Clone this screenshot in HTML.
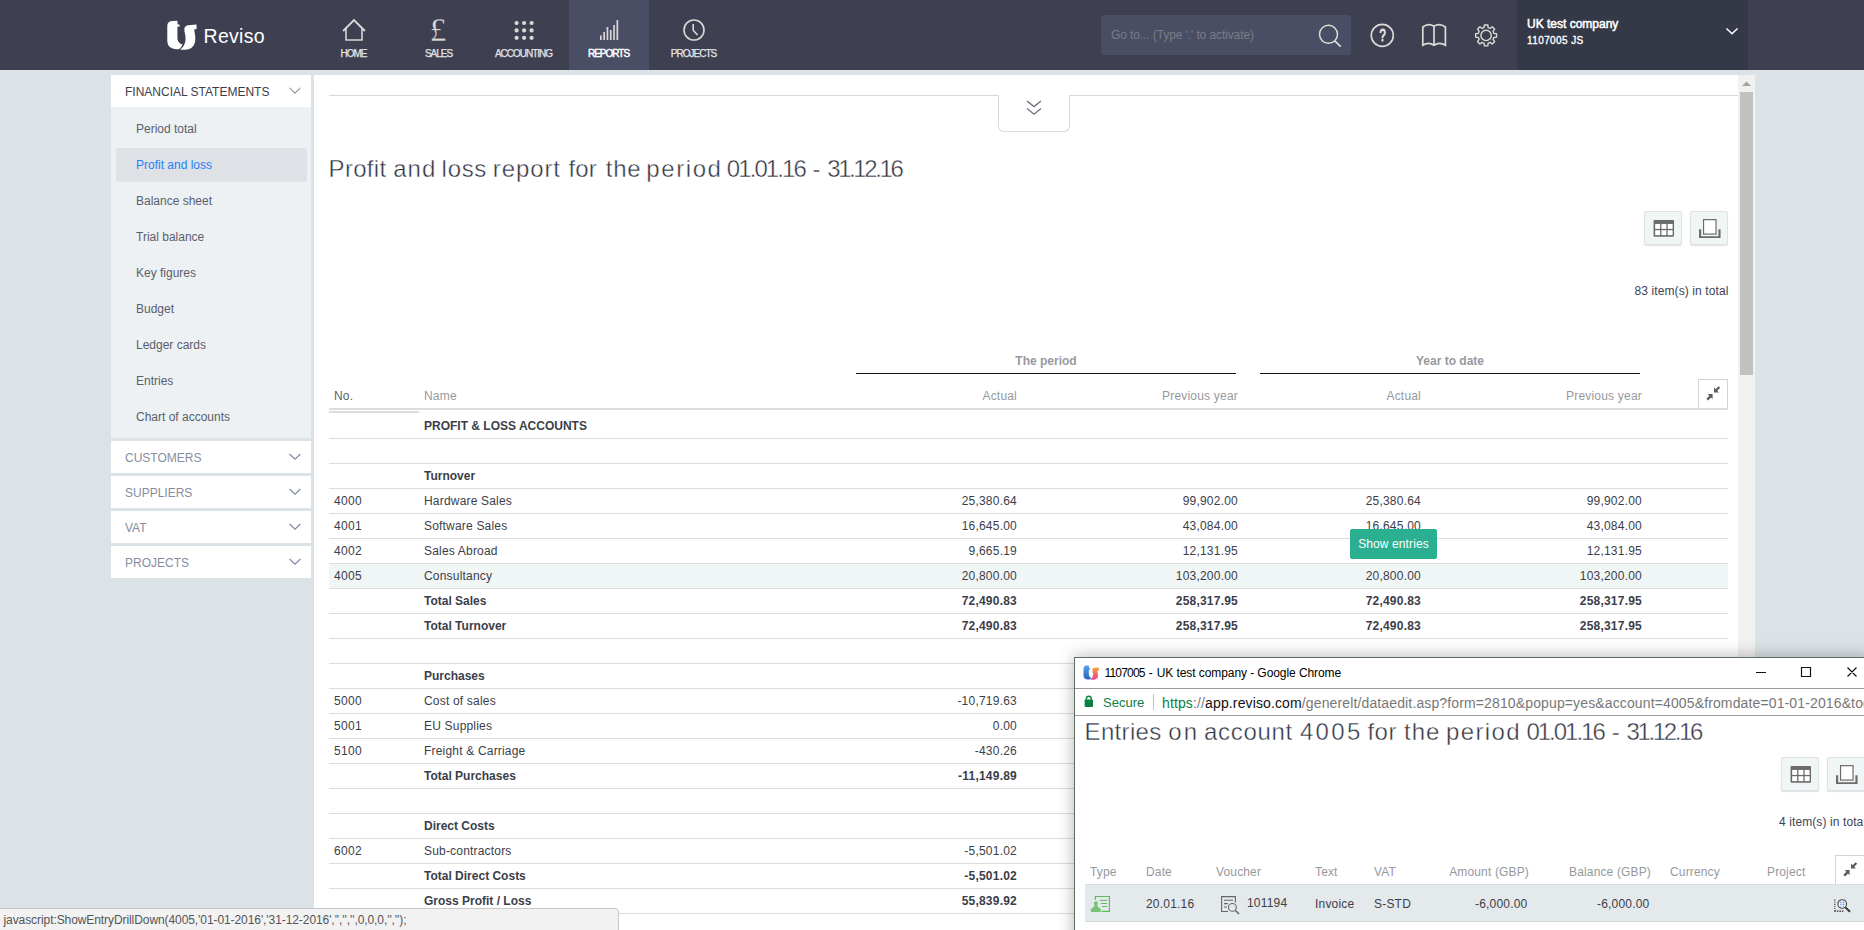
<!DOCTYPE html>
<html lang="en">
<head>
<meta charset="utf-8">
<title>1107005 - UK test company</title>
<style>
*{box-sizing:border-box;margin:0;padding:0}
html,body{width:1864px;height:930px;overflow:hidden}
body{position:relative;background:#dce3e6;font-family:"Liberation Sans",Arial,sans-serif;font-size:12px;color:#3b3d4a}
.abs{position:absolute}
/* ---------- top bar ---------- */
#top{position:absolute;left:0;top:0;width:1864px;height:70px;background:#3e4052}
.nav{position:absolute;top:0;width:80px;height:70px;text-align:center;color:#fff}
.nav.on{background:#4a4e64}
.nav svg{position:absolute;left:20px;top:10px;width:40px;height:40px;overflow:visible}
.nav span{position:absolute;left:-11px;width:100px;top:48px;font-size:10px;line-height:12px;letter-spacing:-1px;padding-left:1px;text-align:center;color:#e4e4e6;-webkit-text-stroke:0.25px #e4e4e6}
.nav.on span{color:#fff;-webkit-text-stroke:0.45px #fff}
#logo-text{position:absolute;left:203.5px;top:22px;font-size:19.5px;line-height:28px;color:#fff;letter-spacing:.3px}
#search{position:absolute;left:1101px;top:15px;width:250px;height:40px;background:#4a4e64;border-radius:3px}
#search span{position:absolute;left:10px;top:13px;font-size:12px;line-height:14px;color:#7a7c86;letter-spacing:-0.1px}
#company{position:absolute;left:1517px;top:0;width:231px;height:70px;background:#343847;color:#fff}
#company b{position:absolute;left:10px;white-space:nowrap}
/* ---------- sidebar ---------- */
#side{position:absolute;left:111px;top:75px;width:200px}
.sh{position:absolute;left:0;width:200px;height:32px;background:#fff;font-size:12px;line-height:34px;padding-left:14px;color:#878d9e;text-transform:uppercase}
.sh svg{position:absolute;right:10.5px;top:11.5px;width:12px;height:8px}
#sbody{position:absolute;left:0;top:32px;width:200px;height:331px;background:#edf1f4}
.si{position:absolute;left:5px;width:191px;height:34px;line-height:34px;padding-left:20px;font-size:12px;color:#5b5e6b;border-radius:3px}
.si.on{background:#dee1e6;color:#1f83f7}
/* ---------- main ---------- */
#main{position:absolute;left:314px;top:75px;width:1441px;height:855px;background:#fff;overflow:hidden}
#title,#ptitle{position:absolute;left:0;top:78px;width:700px;height:32px;font-size:24px;line-height:32px;color:#30323e;white-space:pre;-webkit-text-stroke:0.42px #fff}
#title span,#ptitle span{position:absolute;top:0}
.btn{position:absolute;width:38px;height:34px;background:#f0f5f6;border:1px solid #dde3e5;border-radius:2px;box-shadow:0 1px 1px rgba(0,0,0,.12)}
.btn svg{position:absolute;left:8px;top:7px;width:21.6px;height:19.4px}
.tot{position:absolute;font-size:12px;line-height:14px;color:#3d3f57;white-space:nowrap;text-align:right;letter-spacing:.1px}
/* table */
.gh{position:absolute;font-weight:bold;font-size:12px;color:#98999f;text-align:center;line-height:14px;border-bottom:1px solid #111}
.th{position:absolute;top:314px;font-size:12px;line-height:14px;color:#97989e;white-space:nowrap;letter-spacing:.2px}
.r{position:absolute;left:15px;width:1399px;height:25px;border-bottom:1px solid #dcdcdc;font-size:12px;line-height:24px;color:#3c3e49}
.r i{position:absolute;font-style:normal;top:0;white-space:nowrap}
.r .no{left:5px;letter-spacing:.3px}
.r .nm{left:95px;letter-spacing:.19px}
.r.bd .nm{letter-spacing:0}
.r .a,.r .b,.r .c,.r .d{letter-spacing:.22px}
.r .a{right:711px}
.r .b{right:490px}
.r .c{right:307px}
.r .d{right:86px}
.r.bd{font-weight:bold}
.r.hl{background:#f0f5f5}

/* ---------- popup ---------- */
#pop{position:absolute;left:1074px;top:657px;width:800px;height:300px;background:#fff;border:1px solid #5f6f62;box-shadow:0 0 16px 0 rgba(0,0,0,.3)}
#pop .tb{position:absolute;left:0;top:0;width:100%;height:31px;border-bottom:1px solid #9c9c9c}
#pop .ab{position:absolute;left:0;top:31px;width:100%;height:27px;border-bottom:1px solid #9c9c9c}
#ptitle{top:57.5px}
.pth{position:absolute;top:207px;font-size:12px;line-height:14px;color:#97989e;white-space:nowrap;letter-spacing:.15px}
.ptd{position:absolute;top:239px;font-size:12px;line-height:14px;color:#3c3e49;white-space:nowrap;letter-spacing:.2px}
#status{position:absolute;left:-1px;top:908px;width:620px;height:23px;background:#f2f2f2;border:1px solid #c8c8c8;border-radius:0 4px 0 0;font-size:12px;line-height:23px;color:#555;padding-left:3.5px;white-space:nowrap;overflow:hidden;letter-spacing:-0.08px}
</style>
</head>
<body>
<div id="top">
<svg class="abs" style="left:159.1px;top:13.2px" width="114.4" height="43.7" viewBox="0 0 1864 712"><path fill="#fff" d="M135,210 Q135,140 210,132 L300,128 L303,188 L335,186 L335,222 L300,224 L300,420 Q305,490 385,515 Q370,560 330,585 Q150,610 135,470 Z"/><path fill="#fff" d="M612,188 L612,262 L572,268 Q585,330 592,400 Q600,560 480,590 Q400,605 345,598 Q420,540 432,450 Q440,380 415,300 Q400,215 470,200 Z"/></svg>
<div id="logo-text">Reviso</div>
<div class="nav" style="left:314px"><svg viewBox="0 0 40 40"><path d="M9.1,21 L20,10.2 L30.9,21" fill="none" stroke="#dbd9d6" stroke-width="1.9" stroke-linejoin="miter"/><path d="M12,18.4 V30 H28 V18.4" fill="none" stroke="#d9d7d4" stroke-width="1.6" stroke-linejoin="miter"/></svg><span>HOME</span></div>
<div class="nav" style="left:399px"><div class="abs" style="left:-1px;width:80px;top:9.5px;text-align:center;font-family:'Liberation Serif',serif;font-size:33px;line-height:40px;color:#dcdad8;-webkit-text-stroke:0.3px #3e4052">£</div><span>SALES</span></div>
<div class="nav" style="left:484px"><svg viewBox="0 0 40 40" fill="#d9d7d4"><circle cx="12.6" cy="13" r="2.1"/><circle cx="20.1" cy="13" r="2.1"/><circle cx="27.6" cy="13" r="2.1"/><circle cx="12.6" cy="20.4" r="2.1"/><circle cx="20.1" cy="20.4" r="2.1"/><circle cx="27.6" cy="20.4" r="2.1"/><circle cx="12.6" cy="27.8" r="2.1"/><circle cx="20.1" cy="27.8" r="2.1"/><circle cx="27.6" cy="27.8" r="2.1"/></svg><span>ACCOUNTING</span></div>
<div class="nav on" style="left:569px"><svg viewBox="0 0 40 40" fill="#d9d7d4"><rect x="11" y="25.5" width="1.7" height="4.5"/><rect x="14.3" y="22" width="1.7" height="8"/><rect x="17.6" y="17" width="1.7" height="13"/><rect x="20.9" y="20" width="1.7" height="10"/><rect x="24.2" y="15" width="1.7" height="15"/><rect x="27.5" y="10" width="1.7" height="20"/></svg><span>REPORTS</span></div>
<div class="nav" style="left:654px"><svg viewBox="0 0 40 40"><circle cx="20" cy="20" r="10" fill="none" stroke="#d9d7d4" stroke-width="1.6"/><path d="M19.2,14 V20.3 L23.5,25" fill="none" stroke="#d9d7d4" stroke-width="1.6"/></svg><span>PROJECTS</span></div>
<div id="search"><span>Go to... (Type '.' to activate)</span></div>
<svg class="abs" style="left:1310px;top:15px" width="40" height="40" viewBox="0 0 40 40"><circle cx="18.5" cy="19.3" r="9" fill="none" stroke="#dddad6" stroke-width="1.5"/><path d="M24.8,25.8 L30.7,31.6" stroke="#dddad6" stroke-width="1.7" fill="none"/></svg>
<svg class="abs" style="left:1362px;top:15px" width="40" height="40" viewBox="0 0 40 40"><circle cx="20.3" cy="20.4" r="11" fill="none" stroke="#dddad6" stroke-width="1.6"/><text transform="translate(20.6,25.7) scale(0.68,1)" x="0" y="0" text-anchor="middle" font-family="Liberation Sans, sans-serif" font-size="16.5" fill="#e6e3df" stroke="#e6e3df" stroke-width="0.9">?</text></svg>
<svg class="abs" style="left:1414px;top:15px" width="40" height="40" viewBox="0 0 40 40"><path d="M8.8,30.2 V12 Q14.5,7.6 20,11.2 Q25.5,7.6 31.4,12 V30.2 Q25.5,26.6 20,30.2 Q14.5,26.6 8.8,30.2 Z M20,11.2 V30.2" fill="none" stroke="#dddad6" stroke-width="1.7" stroke-linejoin="miter"/></svg>
<svg class="abs" style="left:1466px;top:15px" width="40" height="40" viewBox="0 0 40 40"><g transform="translate(20.1,20.4)" fill="none" stroke="#dddad6" stroke-width="1.4"><circle r="5.2"/><path d="M-2.06,-7.73 L-1.69,-10.46 L1.69,-10.46 L2.06,-7.73 A8.00,8.00 0 0 1 4.01,-6.92 L6.21,-8.59 L8.59,-6.21 L6.92,-4.01 A8.00,8.00 0 0 1 7.73,-2.06 L10.46,-1.69 L10.46,1.69 L7.73,2.06 A8.00,8.00 0 0 1 6.92,4.01 L8.59,6.21 L6.21,8.59 L4.01,6.92 A8.00,8.00 0 0 1 2.06,7.73 L1.69,10.46 L-1.69,10.46 L-2.06,7.73 A8.00,8.00 0 0 1 -4.01,6.92 L-6.21,8.59 L-8.59,6.21 L-6.92,4.01 A8.00,8.00 0 0 1 -7.73,2.06 L-10.46,1.69 L-10.46,-1.69 L-7.73,-2.06 A8.00,8.00 0 0 1 -6.92,-4.01 L-8.59,-6.21 L-6.21,-8.59 L-4.01,-6.92 A8.00,8.00 0 0 1 -2.06,-7.73 Z" stroke-linejoin="round"/></g></svg>
<div id="company"><b style="top:17px;font-size:12px;line-height:14px;font-weight:normal;-webkit-text-stroke:0.5px #fff">UK test company</b><b style="top:35px;font-size:10px;line-height:12px;font-weight:normal;letter-spacing:0.4px;-webkit-text-stroke:0.35px #fff">1107005 JS</b><svg class="abs" style="left:208px;top:27px" width="14" height="9" viewBox="0 0 14 9"><path d="M1.5,1.5 L7,6.8 L12.5,1.5" fill="none" stroke="#fff" stroke-width="1.5"/></svg></div>
</div>
<div id="side">
<div class="sh" style="top:0;color:#3b3d4a">FINANCIAL STATEMENTS<svg viewBox="0 0 12 8"><path d="M0.6,1 L6,6.2 L11.4,1" fill="none" stroke="#5d5f6c" stroke-width="1"/></svg></div>
<div id="sbody">
<div class="si" style="top:5px">Period total</div>
<div class="si on" style="top:41px">Profit and loss</div>
<div class="si" style="top:77px">Balance sheet</div>
<div class="si" style="top:113px">Trial balance</div>
<div class="si" style="top:149px">Key figures</div>
<div class="si" style="top:185px">Budget</div>
<div class="si" style="top:221px">Ledger cards</div>
<div class="si" style="top:257px">Entries</div>
<div class="si" style="top:293px">Chart of accounts</div>
</div>
<div class="sh" style="top:366px">CUSTOMERS<svg viewBox="0 0 12 8"><path d="M0.6,1 L6,6.2 L11.4,1" fill="none" stroke="#7d88a2" stroke-width="1.1"/></svg></div>
<div class="sh" style="top:401px">SUPPLIERS<svg viewBox="0 0 12 8"><path d="M0.6,1 L6,6.2 L11.4,1" fill="none" stroke="#7d88a2" stroke-width="1.1"/></svg></div>
<div class="sh" style="top:436px">VAT<svg viewBox="0 0 12 8"><path d="M0.6,1 L6,6.2 L11.4,1" fill="none" stroke="#7d88a2" stroke-width="1.1"/></svg></div>
<div class="sh" style="top:471px">PROJECTS<svg viewBox="0 0 12 8"><path d="M0.6,1 L6,6.2 L11.4,1" fill="none" stroke="#7d88a2" stroke-width="1.1"/></svg></div>
</div>
<div id="main">
<div class="abs" style="left:15px;top:20px;width:672px;height:1px;background:#d9d9d9"></div>
<div class="abs" style="left:752px;top:20px;width:672px;height:1px;background:#d9d9d9"></div>
<div class="abs" style="left:684px;top:20px;width:72px;height:37px;border:1px solid #d9d9d9;border-top:none;border-radius:0 0 6px 6px;background:#fff"></div>
<svg class="abs" style="left:712px;top:25px" width="16" height="16" viewBox="0 0 16 16"><path d="M1,1 L8,6.6 L15,1 M1,8.6 L8,14.2 L15,8.6" fill="none" stroke="#6c6e78" stroke-width="1.3"/></svg>
<div id="title"><span style="left:14.6px;letter-spacing:0.30px">Profit </span><span style="left:79.2px;letter-spacing:1.00px">and </span><span style="left:127.6px;letter-spacing:0.70px">loss </span><span style="left:178.8px;letter-spacing:0.90px">report </span><span style="left:254.4px;letter-spacing:0.15px">for </span><span style="left:291.8px;letter-spacing:0.75px">the </span><span style="left:332.3px;letter-spacing:1.58px">period </span><span style="left:412.8px;letter-spacing:-1.91px">01.01.16 </span><span style="left:498.5px;letter-spacing:0.00px">- </span><span style="left:513.2px;letter-spacing:-2.40px">31.12.16</span></div>
<div class="btn" style="left:1330px;top:136px"><svg viewBox="0 0 20 18"><rect x="0.5" y="1" width="19" height="15.5" rx="1" fill="#6b6b6b"/><g fill="#fff"><rect x="2" y="4.6" width="4.6" height="4.6"/><rect x="7.8" y="4.6" width="4.6" height="4.6"/><rect x="13.6" y="4.6" width="4.6" height="4.6"/><rect x="2" y="10.4" width="4.6" height="4.6"/><rect x="7.8" y="10.4" width="4.6" height="4.6"/><rect x="13.6" y="10.4" width="4.6" height="4.6"/></g></svg></div>
<div class="btn" style="left:1376px;top:136px"><svg viewBox="0 0 20 18"><path d="M1,9.5 V17 H19 V9.5" fill="none" stroke="#6b6b6b" stroke-width="2" stroke-linejoin="round"/><rect x="4.2" y="0.6" width="11.6" height="13.4" fill="#fff" stroke="#6b6b6b" stroke-width="1.1"/></svg></div>
<div class="tot" style="right:26.5px;top:209px">83 item(s) in total</div>
<div class="gh" style="left:542px;top:279px;width:380px;height:20px">The period</div>
<div class="gh" style="left:946px;top:279px;width:380px;height:20px">Year to date</div>
<div class="th" style="left:20px;color:#5d5f6b">No.</div>
<div class="th" style="left:110px">Name</div>
<div class="th" style="right:738px">Actual</div>
<div class="th" style="right:517px">Previous year</div>
<div class="th" style="right:334px">Actual</div>
<div class="th" style="right:113px">Previous year</div>
<div class="abs" style="left:1384px;top:304px;width:30px;height:30px;border:1px solid #d4d4d4;border-bottom:none;background:#fff"><svg class="abs" style="left:6px;top:5px" width="17" height="17" viewBox="0 0 17 17" fill="#5a5a5a"><path d="M9,7.6 V2.6 L10.6,4.2 L13.6,1.2 L15.2,2.8 L12.2,5.8 L13.9,7.6 Z"/><path d="M7.6,9 V14 L6,12.4 L3,15.4 L1.4,13.8 L4.4,10.8 L2.7,9 Z"/></svg></div>
<div class="abs" style="left:15px;top:333px;width:1399px;height:2px;background:#dddddd"></div>
<div class="abs" style="left:15px;top:336px;width:90px;height:2px;background:#dddddd"></div>
<div class="r bd" style="top:339px"><i class="nm">PROFIT &amp; LOSS ACCOUNTS</i></div>
<div class="r " style="top:364px"></div>
<div class="r bd" style="top:389px"><i class="nm">Turnover</i></div>
<div class="r " style="top:414px"><i class="no">4000</i><i class="nm">Hardware Sales</i><i class="a">25,380.64</i><i class="b">99,902.00</i><i class="c">25,380.64</i><i class="d">99,902.00</i></div>
<div class="r " style="top:439px"><i class="no">4001</i><i class="nm">Software Sales</i><i class="a">16,645.00</i><i class="b">43,084.00</i><i class="c">16,645.00</i><i class="d">43,084.00</i></div>
<div class="r " style="top:464px"><i class="no">4002</i><i class="nm">Sales Abroad</i><i class="a">9,665.19</i><i class="b">12,131.95</i><i class="c">9,665.19</i><i class="d">12,131.95</i></div>
<div class="r hl" style="top:489px"><i class="no">4005</i><i class="nm">Consultancy</i><i class="a">20,800.00</i><i class="b">103,200.00</i><i class="c">20,800.00</i><i class="d">103,200.00</i></div>
<div class="r bd" style="top:514px"><i class="nm">Total Sales</i><i class="a">72,490.83</i><i class="b">258,317.95</i><i class="c">72,490.83</i><i class="d">258,317.95</i></div>
<div class="r bd" style="top:539px"><i class="nm">Total Turnover</i><i class="a">72,490.83</i><i class="b">258,317.95</i><i class="c">72,490.83</i><i class="d">258,317.95</i></div>
<div class="r " style="top:564px"></div>
<div class="r bd" style="top:589px"><i class="nm">Purchases</i></div>
<div class="r " style="top:614px"><i class="no">5000</i><i class="nm">Cost of sales</i><i class="a">-10,719.63</i></div>
<div class="r " style="top:639px"><i class="no">5001</i><i class="nm">EU Supplies</i><i class="a">0.00</i></div>
<div class="r " style="top:664px"><i class="no">5100</i><i class="nm">Freight &amp; Carriage</i><i class="a">-430.26</i></div>
<div class="r bd" style="top:689px"><i class="nm">Total Purchases</i><i class="a">-11,149.89</i></div>
<div class="r " style="top:714px"></div>
<div class="r bd" style="top:739px"><i class="nm">Direct Costs</i></div>
<div class="r " style="top:764px"><i class="no">6002</i><i class="nm">Sub-contractors</i><i class="a">-5,501.02</i></div>
<div class="r bd" style="top:789px"><i class="nm">Total Direct Costs</i><i class="a">-5,501.02</i></div>
<div class="r bd" style="top:814px"><i class="nm">Gross Profit / Loss</i><i class="a">55,839.92</i></div>
<div class="r " style="top:839px"></div>
<div class="abs" style="left:1036px;top:454px;width:87px;height:30px;background:#2ab091;border-radius:2px;color:#fff;font-size:12px;line-height:31px;letter-spacing:.1px;text-align:center">Show entries</div>
<div class="abs" style="left:1424px;top:0;width:17px;height:855px;background:#f1f1f1"></div>
<div class="abs" style="left:1426px;top:17px;width:13px;height:283px;background:#c1c1c1"></div>
<svg class="abs" style="left:1428px;top:6px" width="9" height="5" viewBox="0 0 9 5"><path d="M0,5 L4.5,0.5 L9,5 Z" fill="#a3a3a3"/></svg>
</div>
<div id="pop">
<div class="tb"><svg class="abs" style="left:8px;top:7px" width="16.4" height="15" viewBox="0 0 17 16"><defs><linearGradient id="fg1" x1="0" y1="0" x2="0" y2="1"><stop offset="0" stop-color="#4aa3ea"/><stop offset="1" stop-color="#2d62c4"/></linearGradient><linearGradient id="fg2" x1="0" y1="0" x2="0" y2="1"><stop offset="0" stop-color="#f6a13a"/><stop offset="1" stop-color="#e8408c"/></linearGradient></defs><path fill="url(#fg1)" d="M0.3,4.5 Q0.3,1 3.5,0.6 L6,0.4 L6,3.2 L7.4,3.2 L7.4,4.8 L6,4.8 L6,10.5 Q6.2,13 8.6,13.6 Q8,15 6.6,15.4 Q0.5,16 0.3,11.5 Z"/><path fill="url(#fg2)" d="M16.6,2.6 L16.6,6 L15,6.2 Q15.6,9 15.8,11 Q16,15 11.5,15.6 Q9.5,15.9 7.5,15.6 Q10,14 10.4,11.5 Q10.7,9 9.8,6.6 Q9.2,3.4 12,3 Z"/></svg><div class="abs" style="left:29.5px;top:7px;font-size:12px;line-height:16px;color:#000;white-space:pre;letter-spacing:-0.8px" id="wt">1107005<span style="letter-spacing:0.6px"> - </span></div><div class="abs" style="left:81.7px;top:7px;font-size:12px;line-height:16px;color:#000;white-space:pre;letter-spacing:-0.075px">UK test company - Google Chrome</div><svg class="abs" style="left:675px;top:4px" width="120" height="22" viewBox="0 0 120 22"><path d="M6,10.5 H16 M51.5,5.5 H60.5 V14.5 H51.5 Z M97.5,5.5 L106.5,14.5 M106.5,5.5 L97.5,14.5" fill="none" stroke="#111" stroke-width="1.15"/></svg></div>
<div class="ab"><svg class="abs" style="left:9px;top:6px" width="10" height="13" viewBox="0 0 10 13"><rect x="0.6" y="4.6" width="8.4" height="7.4" rx="0.8" fill="#0b8043"/><path d="M2.4,5 V3.4 Q2.4,1.2 4.8,1.2 Q7.2,1.2 7.2,3.4 V5" fill="none" stroke="#0b8043" stroke-width="1.4"/></svg><div class="abs" style="left:28px;top:6px;font-size:13px;line-height:16px;color:#0b8043" id="sec">Secure</div><div class="abs" style="left:78px;top:5px;width:1px;height:16px;background:#c4c4c4"></div><div class="abs" style="left:87px;top:6px;font-size:14px;line-height:16px;color:#777;white-space:nowrap;letter-spacing:0.13px" id="url"><span style="color:#0b8043">https</span>://<span style="color:#111" id="host">app.reviso.com</span>/generelt/dataedit.asp?form=2810&amp;popup=yes&amp;account=4005&amp;fromdate=01-01-2016&amp;todate=31-12-2016</div></div>
<div id="ptitle"><span style="left:9.6px;letter-spacing:0.32px">Entries </span><span style="left:93.2px;letter-spacing:2.10px">on </span><span style="left:129.1px;letter-spacing:0.65px">account </span><span style="left:224.9px;letter-spacing:2.33px">4005 </span><span style="left:292.4px;letter-spacing:0.50px">for </span><span style="left:329.1px;letter-spacing:1.00px">the </span><span style="left:370.9px;letter-spacing:1.40px">period </span><span style="left:451.4px;letter-spacing:-2.01px">01.01.16 </span><span style="left:536.7px;letter-spacing:0.00px">- </span><span style="left:551.4px;letter-spacing:-2.34px">31.12.16</span></div>
<div class="btn" style="left:706px;top:99px"><svg viewBox="0 0 20 18"><rect x="0.5" y="1" width="19" height="15.5" rx="1" fill="#6b6b6b"/><g fill="#fff"><rect x="2" y="4.6" width="4.6" height="4.6"/><rect x="7.8" y="4.6" width="4.6" height="4.6"/><rect x="13.6" y="4.6" width="4.6" height="4.6"/><rect x="2" y="10.4" width="4.6" height="4.6"/><rect x="7.8" y="10.4" width="4.6" height="4.6"/><rect x="13.6" y="10.4" width="4.6" height="4.6"/></g></svg></div>
<div class="btn" style="left:752px;top:99px"><svg viewBox="0 0 20 18"><path d="M1,9.5 V17 H19 V9.5" fill="none" stroke="#6b6b6b" stroke-width="2" stroke-linejoin="round"/><rect x="4.2" y="0.6" width="11.6" height="13.4" fill="#fff" stroke="#6b6b6b" stroke-width="1.1"/></svg></div>
<div class="tot" style="left:704px;top:157px">4 item(s) in total</div>
<div class="pth" style="left:15px">Type</div><div class="pth" style="left:71px">Date</div><div class="pth" style="left:141px">Voucher</div><div class="pth" style="left:240px">Text</div><div class="pth" style="left:299px">VAT</div><div class="pth" style="right:344px">Amount (GBP)</div><div class="pth" style="right:222px">Balance (GBP)</div><div class="pth" style="left:595px">Currency</div><div class="pth" style="left:692px">Project</div>
<div class="abs" style="left:760px;top:197px;width:30px;height:30px;border:1px solid #d4d4d4;border-bottom:none;background:#fff"><svg class="abs" style="left:6px;top:5px" width="17" height="17" viewBox="0 0 17 17" fill="#5a5a5a"><path d="M9,7.6 V2.6 L10.6,4.2 L13.6,1.2 L15.2,2.8 L12.2,5.8 L13.9,7.6 Z"/><path d="M7.6,9 V14 L6,12.4 L3,15.4 L1.4,13.8 L4.4,10.8 L2.7,9 Z"/></svg></div>
<div class="abs" style="left:10px;top:226px;width:800px;height:38px;background:#e4e9ec;border-top:1px solid #d8dde0;border-bottom:1px solid #d3d8db"></div>
<svg class="abs" style="left:15px;top:237px" width="21" height="18" viewBox="0 0 21 18"><path d="M5.4,4.8 V1.5 H19.4 V16.4 H11.6" fill="none" stroke="#62b95f" stroke-width="1.2"/><path d="M9.8,5.4 H17.1 M10.9,8.5 H17.1 M11.9,11.5 H17.1" stroke="#62b95f" stroke-width="1"/><circle cx="5.9" cy="8.3" r="2" fill="#77c374"/><path d="M4.7,9.6 H7.1 L7.6,11.6 L9.4,13.2 H2.4 L4.2,11.6 Z" fill="#77c374"/><path d="M0.9,17 V14.6 Q0.9,13.1 2.6,13.1 H9.1 Q10.8,13.1 10.8,14.6 V17 Z" fill="#77c374"/></svg>
<div class="ptd" style="left:71px">20.01.16</div><svg class="abs" style="left:145px;top:237px" width="20" height="20" viewBox="0 0 20 20" fill="none" stroke="#666" stroke-width="1.1"><path d="M8,16.5 H1.6 V1.6 H15.4 V7.5"/><path d="M4,5.2 H13 M4,8.6 H8 M4,12 H7"/><circle cx="12.4" cy="12.4" r="3.9"/><path d="M15.2,15.2 L19,19" stroke-width="1.6"/></svg><div class="ptd" style="left:172px;top:238px">101194</div><div class="ptd" style="left:240px">Invoice</div><div class="ptd" style="left:299px">S-STD</div><div class="ptd" style="right:345.5px">-6,000.00</div><div class="ptd" style="right:223.5px">-6,000.00</div>
<svg class="abs" style="left:759px;top:240px" width="18" height="15" viewBox="0 0 18 15"><path d="M0.8,1.6 V13" fill="none" stroke="#444" stroke-width="1.2" stroke-dasharray="1.1 1"/><path d="M0.4,13.2 H10.4" fill="none" stroke="#333" stroke-width="1.2" stroke-dasharray="1.6 0.9"/><circle cx="8.2" cy="6" r="4.3" fill="#eef3fa" stroke="#444" stroke-width="1.1"/><path d="M6.2,4.3 H7.4 M8.6,4.3 H10.2 M6.2,6.3 H7.4 M8.6,6.3 H10.2 M6.6,8.2 H7.2 M9,8.2 H9.8" stroke="#3b7ad6" stroke-width="0.9"/><path d="M11.4,9.4 L16,13.8" stroke="#333" stroke-width="2"/></svg>
</div>
<div id="status">javascript:ShowEntryDrillDown(4005,'01-01-2016','31-12-2016','','','',0,0,0,'','');</div>
</body>
</html>
